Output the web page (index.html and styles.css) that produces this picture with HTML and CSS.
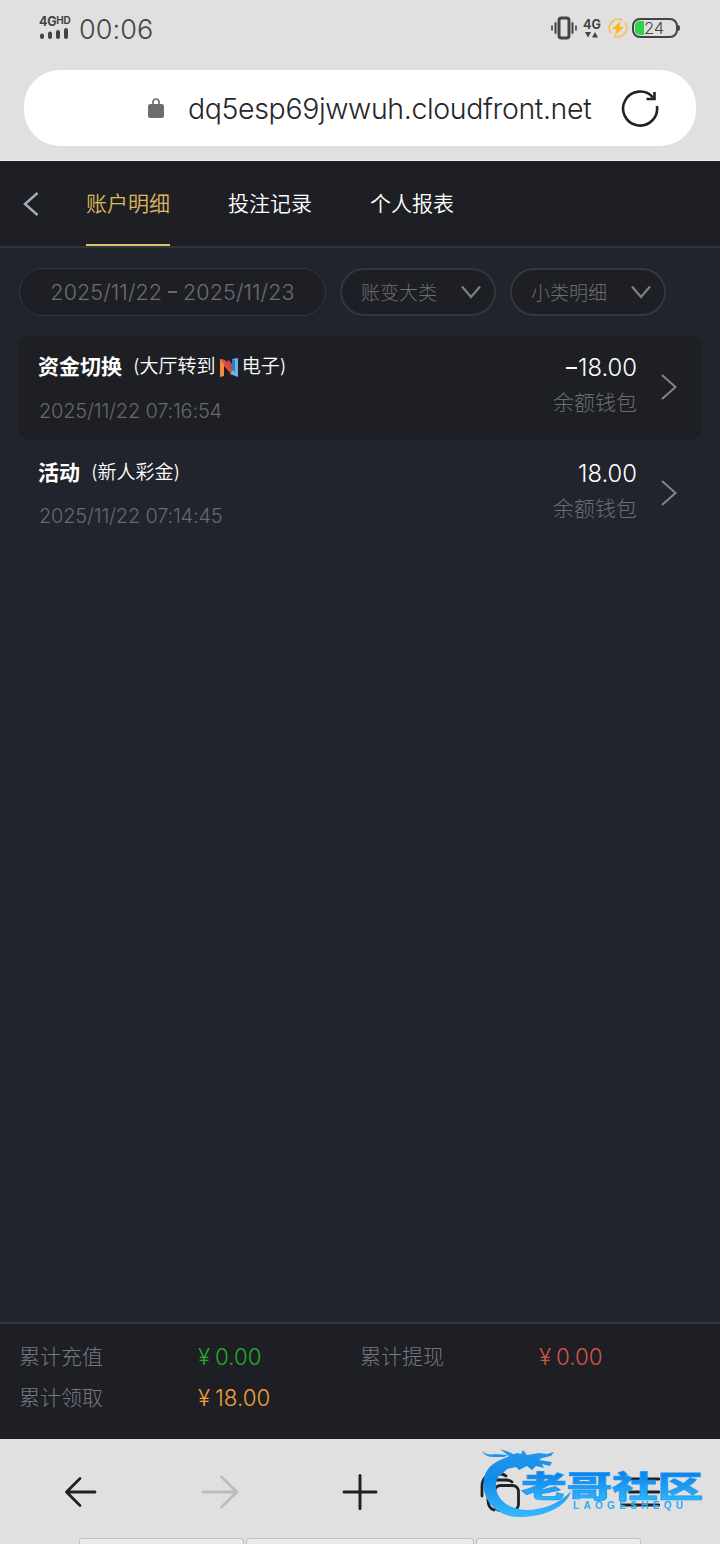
FILE: index.html
```html
<!DOCTYPE html>
<html lang="zh-CN">
<head>
  <meta charset="UTF-8">
  <meta name="viewport" content="width=device-width, initial-scale=1.0">
  <title>账户明细</title>
  <link rel="stylesheet" href="styles.css">
</head>
<body>
  <div class="phone">
    <!-- Status bar -->
    <div class="status-bar">
      <div class="signal">
        <div class="network">4G<span>HD</span></div>
        <svg width="30" height="12" viewBox="0 0 30 12" fill="none" stroke="#444" stroke-width="4" stroke-linecap="round">
          <path d="M3 7.500v1.500M11 5.500v3.500M19 4v5M27 2v7"/>
        </svg>
      </div>
      <div class="clock">00:06</div>
      <div class="status-icons">
        <svg width="26" height="24" viewBox="0 0 26 24" fill="none" stroke="#444" stroke-linecap="round">
          <rect x="8" y="2" width="10" height="20" rx="2.5" stroke-width="3"/>
          <path d="M4.500 7v10M21.500 7v10" stroke-width="2"/>
          <path d="M1 10v4M25 10v4" stroke-width="1.600"/>
        </svg>
        <div class="data">
          <span>4G</span>
          <svg width="14" height="7" viewBox="0 0 14 7" fill="#444"><path d="M0 1h6l-3 5.500zM7 6.500h6L10 1z"/></svg>
        </div>
        <svg class="bolt" width="20" height="20" viewBox="0 0 20 20" fill="none">
          <path d="M3 15.500A9 9 0 0 1 14 2M17 4.500A9 9 0 0 1 6 18" stroke="#f0c568" stroke-width="2"/>
          <path d="M12.500 3.500L4 11h4.500L7 17l9-8h-4.500z" fill="#fbb614"/>
        </svg>
        <div class="battery">
          <svg width="49" height="20" viewBox="0 0 49 20">
            <path d="M12 3v14H8a5 5 0 0 1-5-5V8a5 5 0 0 1 5-5z" fill="#2bd24b"/>
            <rect x="1" y="1" width="44" height="18" rx="7" fill="none" stroke="#444" stroke-width="2"/>
            <path d="M46 7q2 0 2 3t-2 3z" fill="#444"/>
          </svg>
          <span>24</span>
        </div>
      </div>
    </div>

    <!-- Browser address bar -->
    <div class="browser-bar">
      <div class="address">
        <svg class="lock" width="16" height="20" viewBox="0 0 16 20">
          <path d="M5 8V4a3 3 0 0 1 6 0V8" fill="none" stroke="#6d6d6d" stroke-width="1.700"/>
          <rect y="6" width="16" height="14" rx="2.500" fill="#6d6d6d"/>
        </svg>
        <span class="url">dq5esp69jwwuh.cloudfront.net</span>
        <svg class="reload" width="38" height="38" viewBox="0 0 38 38" fill="none" stroke="#202124" stroke-width="2.600">
          <path d="M35.900 17A17 17 0 1 1 32 8.500"/>
          <path d="M25.500 10h8V3"/>
        </svg>
      </div>
    </div>

    <!-- Page tabs -->
    <header class="tabs">
      <svg class="back" width="16" height="24" viewBox="0 0 16 24" fill="none" stroke="#a5abb8" stroke-width="2.400"><path d="M14.500 1L2 12l12.500 11"/></svg>
      <div class="tab active">账户明细</div>
      <div class="tab">投注记录</div>
      <div class="tab">个人报表</div>
    </header>

    <main>
      <div class="filters">
        <div class="date-range">2025/11/22 <i></i> 2025/11/23</div>
        <div class="select"><span>账变大类</span>
          <svg width="20" height="14" viewBox="0 0 20 14" fill="none" stroke="#7b7f87" stroke-width="2.200"><path d="M1 1.500l9 10.500 9-10.500"/></svg>
        </div>
        <div class="select"><span>小类明细</span>
          <svg width="20" height="14" viewBox="0 0 20 14" fill="none" stroke="#7b7f87" stroke-width="2.200"><path d="M1 1.500l9 10.500 9-10.500"/></svg>
        </div>
      </div>

      <div class="record dark">
        <div class="info">
          <div class="title"><b>资金切换</b><span>(大厅转到</span>
            <svg class="game-logo" width="18" height="19" viewBox="0 0 18 19">
              <path d="M0 1l4 1v16l-4 1z" fill="#f08a3c"/>
              <path d="M0 1l5 1 7 9v6L4 8v-2z" fill="#df4d3e"/>
              <path d="M6 4l3-2 3 4v6z" fill="#b94a55"/>
              <path d="M12 1l6-1v19l-8-3 2-2z" fill="#69b5e5"/>
              <path d="M12 1l3 1v12l-3-2z" fill="#287fba"/>
            </svg>
            <span>电子)</span>
          </div>
          <div class="time">2025/11/22 07:16:54</div>
        </div>
        <div class="money">
          <div class="amount"><i></i>18.00</div>
          <div class="wallet">余额钱包</div>
        </div>
        <svg class="arrow" width="18" height="28" viewBox="0 0 18 28" fill="none" stroke="#80848b" stroke-width="2"><path d="M2 2l13.500 12L2 26"/></svg>
      </div>

      <div class="record">
        <div class="info">
          <div class="title"><b>活动</b><span>(新人彩金)</span></div>
          <div class="time">2025/11/22 07:14:45</div>
        </div>
        <div class="money">
          <div class="amount">18.00</div>
          <div class="wallet">余额钱包</div>
        </div>
        <svg class="arrow" width="18" height="28" viewBox="0 0 18 28" fill="none" stroke="#80848b" stroke-width="2"><path d="M2 2l13.500 12L2 26"/></svg>
      </div>
    </main>

    <footer class="totals">
      <span>累计充值</span><span class="sum green"><em>¥</em>0.00</span>
      <span>累计提现</span><span class="sum red"><em>¥</em>0.00</span>
      <span>累计领取</span><span class="sum orange"><em>¥</em>18.00</span>
    </footer>

    <!-- Browser navigation -->
    <nav class="browser-nav">
      <div class="nav-buttons">
        <svg width="40" height="40" viewBox="0 0 40 40" fill="none" stroke="#202124" stroke-width="2.800" stroke-linecap="round" stroke-linejoin="round"><path d="M35 20H7M20 6.500L6.500 20 20 33.500"/></svg>
        <svg width="40" height="40" viewBox="0 0 40 40" fill="none" stroke="#bcbcbc" stroke-width="2.800" stroke-linecap="round" stroke-linejoin="round"><path d="M3 20h34M21.500 5L37 20 21.500 35"/></svg>
        <svg width="40" height="40" viewBox="0 0 40 40" fill="none" stroke="#202124" stroke-width="3" stroke-linecap="round"><path d="M4 20h32M20 3.500v33"/></svg>
        <svg width="40" height="40" viewBox="0 0 40 40" fill="none" stroke="#202124" stroke-width="2.800" stroke-linecap="round">
          <rect x="14.500" y="13.500" width="24" height="25" rx="6"/>
          <path d="M8 28V17q0-9 9-9h9q4 0 6 2M2 24V15Q2 2 15 2h5q4 0 6 2M8 28q0 8 6 10"/>
        </svg>
        <svg width="40" height="40" viewBox="0 0 40 40" fill="none" stroke="#202124" stroke-width="2.800" stroke-linecap="round"><path d="M2 7h37M9 20h30M2 33h37"/></svg>
      </div>
      <div class="suggestions">
        <div></div>
        <div class="wide"></div>
        <div></div>
      </div>
      <svg class="watermark" width="226" height="72" viewBox="0 0 226 72">
        <defs>
          <linearGradient id="blue" gradientUnits="userSpaceOnUse" x1="0" y1="5" x2="0" y2="68">
            <stop offset="0" stop-color="#2196ed"/>
            <stop offset=".42" stop-color="#118be9"/>
            <stop offset="1" stop-color="#35b8ff"/>
          </linearGradient>
          <linearGradient id="nameBlue" x1="0" y1="0" x2="0" y2="1">
            <stop offset=".25" stop-color="#0d84ea"/>
            <stop offset=".85" stop-color="#2fb4ff"/>
          </linearGradient>
        </defs>
        <g fill="url(#blue)">
          <!-- dragon body and tail -->
          <path d="M32 9C13 12 3 22 3.500 37 4.500 56 19 69 40 69 64 69 87 59 91 43 82 54 64 62 46 62 26 61 15 49 16 36 17 25 27 18 44 15L50 9z"/>
          <!-- whiskers -->
          <path d="M2 3Q8 8 15 6L28 7 24 9 14 9Q5 9 2 3zM20 1l9 3 8 4-8 0z"/>
          <!-- head and mane -->
          <path d="M27 9l10-4 4 1 2-4 4 5 12-2 8 1 7-2-3 4-9 2-3 2 13 2-2 4-8-2 2 4-8-2-4 4-5-4-8 4-3-3-9 2-7 7 0-8-8 1 5-7z"/>
          <text class="mark-name" fill="url(#nameBlue)" x="41" y="50" textLength="182" lengthAdjust="spacingAndGlyphs" transform="matrix(1 0 0 .86 0 6.500)">老哥社区</text>
          <text class="mark-latin" x="93" y="61" textLength="110" lengthAdjust="spacing">LAOGESHEQU</text>
        </g>
      </svg>
    </nav>
  </div>
</body>
</html>
```
FILE: styles.css
```css
* {
  margin: 0;
  padding: 0;
  box-sizing: border-box;
}

body {
  font-family: Inter, "Noto Sans CJK SC", sans-serif;
  font-weight: 300;
  background-color: #21242c;
  color: #fff;
}

svg {
  display: block;
  flex-shrink: 0;
}

.phone {
  width: 720px;
  height: 1544px;
  display: flex;
  flex-direction: column;
  overflow: hidden;
}

/* Status bar */
.status-bar {
  height: 60px;
  padding: 0 39px 4px 39px;
  display: flex;
  align-items: center;
  background-color: #e0e0e0;
  color: #444;
}

.signal {
  width: 40px;
}

.network {
  display: flex;
  align-items: flex-start;
  font-size: 12.5px;
  font-weight: 700;
  line-height: 12px;
  letter-spacing: -0.3px;
}

.network span {
  font-size: 10px;
  line-height: 8px;
}

.clock {
  font-size: 27px;
  font-weight: 350;
  line-height: 30px;
  letter-spacing: 0.1px;
  padding-top: 4px;
}

.status-icons {
  display: flex;
  align-items: center;
  margin-left: auto;
}

.data {
  width: 18px;
  margin-left: 6px;
  display: flex;
  flex-direction: column;
  align-items: center;
  font-size: 12.5px;
  font-weight: 700;
  line-height: 13px;
}

.bolt {
  margin-left: 7px;
}

.battery {
  position: relative;
  margin-left: 4px;
}

.battery span {
  position: absolute;
  left: 12px;
  top: 0;
  font-size: 16.5px;
  font-weight: 350;
  line-height: 20px;
}

/* Address bar */
.browser-bar {
  height: 101px;
  padding: 10px 24px 0;
  background-color: #e0e0e0;
  border-bottom: 1px solid #edf1f1;
}

.address {
  height: 76px;
  padding: 0 37px 0 124px;
  display: flex;
  align-items: center;
  border-radius: 36px;
  background-color: #fff;
  color: #26272a;
}

.url {
  margin-left: 24px;
  padding-top: 1px;
  font-size: 28.5px;
  letter-spacing: -0.37px;
  white-space: nowrap;
}

.reload {
  margin-left: auto;
}

/* Tabs */
.tabs {
  height: 87px;
  padding-left: 23px;
  display: flex;
  align-items: stretch;
  background-color: #1e1f24;
  border-bottom: 2px solid #30343d;
}

.back {
  align-self: center;
  margin-right: 47px;
}

.tab {
  margin-right: 58px;
  padding-top: 2px;
  font-size: 21px;
  font-weight: 350;
  line-height: 81px;
  border-bottom: 2px solid transparent;
}

.tab.active {
  color: #dfb75d;
  border-color: #dfc06e;
}

/* Filters */
main {
  flex: 1;
  padding: 20px 19px;
}

.filters {
  display: flex;
  gap: 14px;
  margin-bottom: 19px;
  color: #6a6e76;
}

.date-range,
.select {
  height: 48px;
  display: flex;
  align-items: center;
  border: 1px solid #32363d;
  border-radius: 24px;
  background-color: #1e1f24;
}

.date-range {
  width: 307px;
  padding-bottom: 1px;
  justify-content: center;
  font-size: 21.5px;
  letter-spacing: 0.1px;
}

.date-range i {
  width: 9px;
  height: 2px;
  margin: 0 6px;
  background-color: #666a72;
}

.select {
  width: 156px;
  padding: 0 13px 0 19px;
  justify-content: space-between;
  border-width: 2px;
  font-size: 19px;
}

.select span {
  padding-bottom: 2px;
}

/* Records */
.record {
  height: 105px;
  padding: 0 23px 0 20px;
  display: flex;
  border-radius: 12px;
}

.record.dark {
  background-color: #1e1f24;
}

.record + .record {
  margin-top: 1px;
}

.info {
  padding-top: 17px;
}

.title {
  height: 30px;
  display: flex;
  align-items: center;
  font-size: 19px;
  font-weight: 350;
  line-height: 30px;
}

.title b {
  margin: 0 11px 0 -1px;
  font-size: 21px;
  font-weight: 700;
}

.game-logo {
  margin: 0 4px;
}

.time {
  margin-top: 16px;
  font-size: 20px;
  line-height: 26px;
  letter-spacing: -0.2px;
  color: #646870;
}

.record + .record .time {
  margin-top: 15px;
}

.money {
  margin-left: auto;
  padding-top: 17px;
  text-align: right;
}

.amount {
  display: flex;
  align-items: center;
  justify-content: flex-end;
  font-size: 23.8px;
  font-weight: 350;
  line-height: 32px;
}

.amount i {
  width: 11px;
  height: 2px;
  margin-right: 1px;
  background-color: #fff;
}

.wallet {
  margin-top: 3px;
  font-size: 21px;
  line-height: 32px;
  color: #6a6e76;
}

.arrow {
  margin: 38px 0 0 23px;
}

/* Totals */
.totals {
  height: 117px;
  padding: 12px 20px 0 19px;
  display: grid;
  grid-template-columns: 179px 162px 179px 161px;
  grid-auto-rows: 41px;
  line-height: 41px;
  font-size: 21px;
  background-color: #1e1f24;
  border-top: 2px solid #30343d;
  color: #747880;
}

.sum {
  font-size: 22.3px;
}

.sum em {
  margin-right: 5px;
  font-style: normal;
}

.green {
  color: #23a92c;
}

.red {
  color: #d65147;
}

.orange {
  color: #eda139;
}

/* Browser navigation */
.browser-nav {
  position: relative;
  height: 105px;
  display: flex;
  flex-direction: column;
  background-color: #e0e0e0;
}

.nav-buttons {
  height: 98px;
  padding: 7px 60px 0;
  display: flex;
  align-items: center;
  justify-content: space-between;
}

.suggestions {
  height: 6px;
  margin-top: 1px;
  display: flex;
  justify-content: center;
  gap: 2px;
}

.suggestions div {
  width: 165px;
  border: 1px solid #c4c4c4;
  border-bottom: 0;
  border-radius: 3px 3px 0 0;
  background-color: #ebebeb;
}

.suggestions .wide {
  width: 228px;
}

.watermark {
  position: absolute;
  left: 480px;
  top: 9px;
}

.mark-name {
  font-family: "Noto Sans CJK SC", sans-serif;
  font-size: 34px;
  font-weight: 900;
  stroke: #1c97ef;
  stroke-width: 0.8px;
}

.mark-latin {
  font-family: "Liberation Sans", sans-serif;
  font-size: 10px;
  font-weight: 700;
}
```
